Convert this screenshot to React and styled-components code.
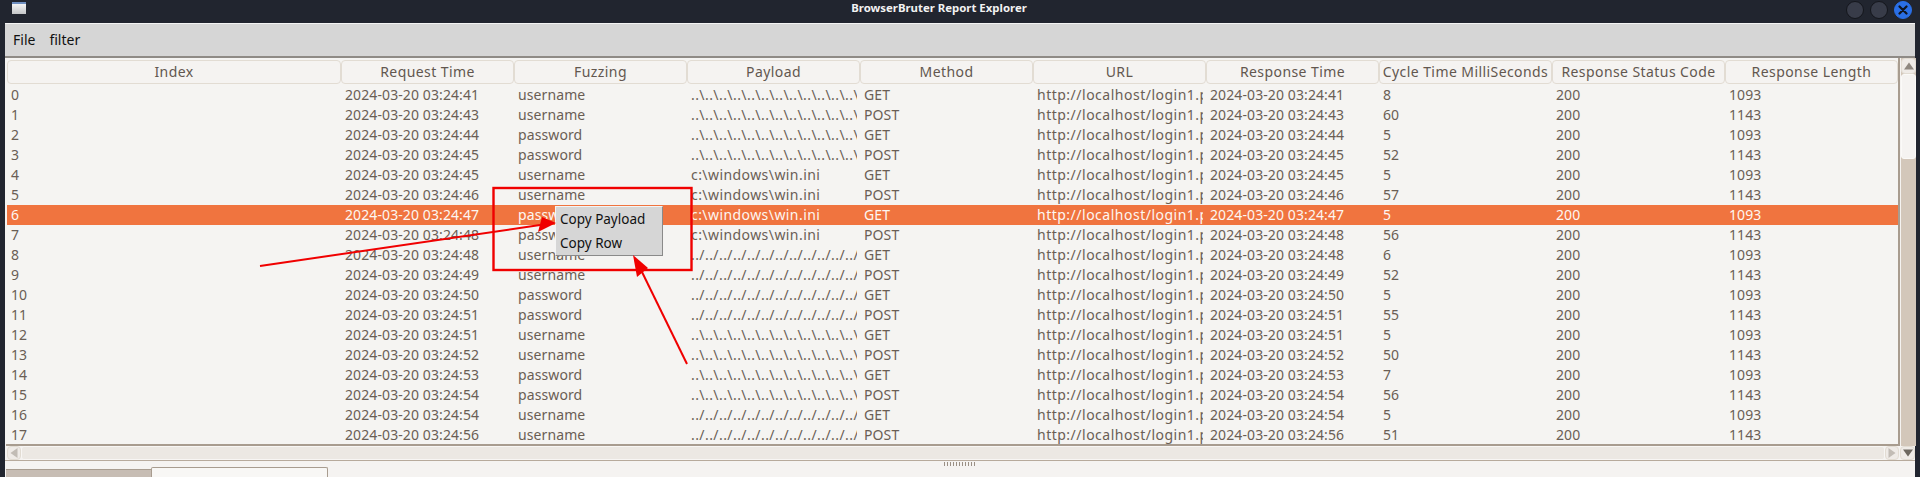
import React from "react";
import styled, { createGlobalStyle } from "styled-components";

const Global = createGlobalStyle`
  html, body { margin: 0; padding: 0; background: #21252f; overflow: hidden; }
  * { box-sizing: border-box; }
`;

const BACK = "..\\".repeat(13);
const WIN = "c:\\windows\\win.ini";
const FWD = "../".repeat(13);
const URL_TEXT = "http://localhost/login1.p";

const rows = [
  [0, "41", "username", BACK, "GET", "8", "1093"],
  [1, "43", "username", BACK, "POST", "60", "1143"],
  [2, "44", "password", BACK, "GET", "5", "1093"],
  [3, "45", "password", BACK, "POST", "52", "1143"],
  [4, "45", "username", WIN, "GET", "5", "1093"],
  [5, "46", "username", WIN, "POST", "57", "1143"],
  [6, "47", "password", WIN, "GET", "5", "1093"],
  [7, "48", "password", WIN, "POST", "56", "1143"],
  [8, "48", "username", FWD, "GET", "6", "1093"],
  [9, "49", "username", FWD, "POST", "52", "1143"],
  [10, "50", "password", FWD, "GET", "5", "1093"],
  [11, "51", "password", FWD, "POST", "55", "1143"],
  [12, "51", "username", BACK, "GET", "5", "1093"],
  [13, "52", "username", BACK, "POST", "50", "1143"],
  [14, "53", "password", BACK, "GET", "7", "1093"],
  [15, "54", "password", BACK, "POST", "56", "1143"],
  [16, "54", "username", FWD, "GET", "5", "1093"],
  [17, "56", "username", FWD, "POST", "51", "1143"],
];

const headers = ["Index", "Request Time", "Fuzzing", "Payload", "Method", "URL", "Response Time", "Cycle Time MilliSeconds", "Response Status Code", "Response Length"];

const COLS = "334px repeat(9, 173px)";

const Page = styled.div`
  position: relative;
  width: 1920px;
  height: 477px;
  overflow: hidden;
  background: #21252f;
  font-family: "Noto Sans", "Open Sans", sans-serif;
  font-size: 14px;
  display: flex;
  flex-direction: column;
`;

const TitleBar = styled.div`
  position: relative;
  height: 23px;
  flex: none;
  display: flex;
  align-items: flex-start;
  justify-content: space-between;
  padding: 2px 8px 0 12px;
`;

const TitleText = styled.div`
  position: absolute;
  left: 0;
  right: 42px;
  top: 0;
  line-height: 16px;
  text-align: center;
  color: #f2f2f2;
  font-size: 11.4px;
  font-weight: 700;
`;

const WindowIcon = styled.div`
  width: 14px;
  height: 12px;
  border-top: 2px solid #6f8fc0;
  background: linear-gradient(180deg, #f4f4f4, #c4c6c8);
`;

const Controls = styled.div`
  display: flex;
  gap: 6px;
  margin-top: -1px;
`;

const Control = styled.div`
  width: 18px;
  height: 18px;
  border-radius: 50%;
  background: ${(p) => (p.$close ? "#2a6fe6" : "#383c49")};
  border: 1px solid ${(p) => (p.$close ? "#2a6fe6" : "#14161c")};
  display: flex;
  align-items: center;
  justify-content: center;
`;

const Win = styled.div`
  flex: 1;
  margin: 0 5px;
  display: flex;
  flex-direction: column;
  background: #f5f3f1;
  border-top: 1px solid #f4f4f4;
  min-height: 0;
`;

const MenuBar = styled.div`
  flex: none;
  height: 34px;
  background: #d6d6d6;
  border-bottom: 2px solid #8f8b86;
  display: flex;
  align-items: center;
  gap: 14px;
  padding: 0 0 2px 8px;
  color: #111;
  font-size: 14px;
`;

const Body = styled.div`
  flex: none;
  height: 388px;
  display: flex;
  padding-left: 1px;
`;

const TableColumn = styled.div`
  width: 1894px;
  display: flex;
  flex-direction: column;
`;

const Table = styled.div`
  height: 388px;
  flex: 1;
  background: #f5f4f2;
  border-right: 2px solid #a89c8f;
  border-bottom: 2px solid #a89c8f;
  padding: 2px 0 0 1px;
  overflow: hidden;
`;

const RowGrid = styled.div`
  display: grid;
  grid-template-columns: ${COLS};
  width: 1891px;
`;

const HeaderCell = styled.div`
  height: 24px;
  line-height: 22px;
  text-align: center;
  color: #62574f;
  background: #f5f3f1;
  border: 1px solid #e2dcd3;
  border-radius: 4px;
  white-space: nowrap;
  overflow: hidden;
  letter-spacing: 0.42px;
`;

const HeaderSpacer = styled.div`
  height: 1px;
`;

const DataRow = styled(RowGrid)`
  height: 20px;
  background: ${(p) => (p.$selected ? "#f0743f" : "transparent")};
  color: ${(p) => (p.$selected ? "#fdf7f2" : "#6a5e55")};
`;

const Cell = styled.div`
  line-height: 20px;
  padding: 0 3px 0 4px;
  white-space: nowrap;
  overflow: hidden;
  letter-spacing: ${(p) => p.$spacing || "0.1px"};
`;

const CellClip = styled.div`
  overflow: hidden;
`;

const VScroll = styled.div`
  width: 15px;
  margin-left: 1px;
  display: flex;
  flex-direction: column;
  background: #d3c7ba;
`;

const ScrollButton = styled.div`
  flex: none;
  width: ${(p) => p.$w}px;
  height: ${(p) => p.$h}px;
  background: #efebe7;
  border: 1px solid #e2dcd3;
  border-radius: 4px;
  display: flex;
  align-items: center;
  justify-content: center;
`;

const VThumb = styled.div`
  flex: none;
  height: 85px;
  background: #f5f3f1;
  border: 1px solid #fbfaf8;
  border-radius: 3px;
`;

const VRest = styled.div`
  flex: 1;
`;

const HScrollRow = styled.div`
  flex: none;
  height: 15px;
  display: flex;
  border-bottom: 1px solid #b7aa9c;
`;

const HScroll = styled.div`
  width: 1894px;
  display: flex;
  padding-left: 2px;
  background: #f5f3f1;
`;

const HThumb = styled.div`
  flex: 1;
  background: #ece8e3;
  border: 1px solid #f8f6f4;
  border-radius: 3px;
`;

const Corner = styled.div`
  flex: 1;
  display: flex;
  justify-content: flex-end;
  background: #f5f3f1;
`;

const Footer = styled.div`
  flex: 1;
  position: relative;
  background: #f5f3f1;
  display: flex;
  align-items: flex-end;
  padding-left: 1px;
  overflow: hidden;
`;

const Grip = styled.div`
  position: absolute;
  left: 939px;
  top: 1px;
  width: 31px;
  height: 4px;
  background: repeating-linear-gradient(90deg, #9a8f84 0 1px, #f5f3f1 1px 3px);
`;

const Tab = styled.div`
  flex: none;
  width: ${(p) => p.$w}px;
  height: ${(p) => p.$h}px;
  background: ${(p) => (p.$active ? "#f8f7f5" : "#c7bdb4")};
  border-top: 1px solid #a89c8f;
  border-left: ${(p) => (p.$active ? "1px solid #a89c8f" : "none")};
  border-right: ${(p) => (p.$active ? "1px solid #a89c8f" : "none")};
  border-radius: ${(p) => (p.$active ? "2px 2px 0 0" : "0")};
`;

const ContextMenu = styled.div`
  position: absolute;
  left: 555px;
  top: 206px;
  width: 108px;
  height: 50px;
  background: #d6d6d6;
  border: 1px solid;
  border-color: #f4f4f4 #8a8a8a #8a8a8a #f4f4f4;
  color: #111;
  font-size: 13.5px;
  z-index: 2;
`;

const MenuItem = styled.div`
  height: 24px;
  line-height: 24px;
  padding-left: 4px;
`;

const Annotations = styled.svg`
  position: absolute;
  left: 0;
  top: 0;
  z-index: 3;
  pointer-events: none;
`;

const Triangle = ({ dir, color }) => {
  const pts = { up: "0,7 5,0 10,7", down: "0,0 10,0 5,7", left: "7,0 7,10 0,5", right: "0,0 0,10 7,5" }[dir];
  return (
    <svg width="10" height="10" viewBox="0 0 10 10">
      <polygon points={pts} fill={color} transform={dir === "up" || dir === "down" ? "translate(0 1.5)" : "translate(1.5 0)"} />
    </svg>
  );
};

export default function App() {
  return (
    <Page>
      <Global />
      <TitleBar>
        <WindowIcon />
        <TitleText>BrowserBruter Report Explorer</TitleText>
        <Controls>
          <Control />
          <Control />
          <Control $close>
            <svg width="10" height="10" viewBox="0 0 10 10">
              <path d="M1.5 1.5 L8.5 8.5 M8.5 1.5 L1.5 8.5" stroke="#10151f" strokeWidth="2.2" strokeLinecap="round" />
            </svg>
          </Control>
        </Controls>
      </TitleBar>
      <Win>
        <MenuBar>
          <span>File</span>
          <span>filter</span>
        </MenuBar>
        <Body>
          <TableColumn>
            <Table>
              <RowGrid>
                {headers.map((h) => (
                  <HeaderCell key={h}>{h}</HeaderCell>
                ))}
              </RowGrid>
              <HeaderSpacer />
              {rows.map(([idx, t, fuzz, payload, method, cycle, len]) => {
                const stamp = `2024-03-20 03:24:${t}`;
                return (
                  <DataRow key={idx} $selected={idx === 6}>
                    <Cell>{idx}</Cell>
                    <Cell>{stamp}</Cell>
                    <Cell>{fuzz}</Cell>
                    <Cell $spacing="0.43px"><CellClip>{payload}</CellClip></Cell>
                    <Cell>{method}</Cell>
                    <Cell $spacing="0.5px"><CellClip>{URL_TEXT}</CellClip></Cell>
                    <Cell>{stamp}</Cell>
                    <Cell>{cycle}</Cell>
                    <Cell>200</Cell>
                    <Cell>{len}</Cell>
                  </DataRow>
                );
              })}
            </Table>
          </TableColumn>
          <VScroll>
            <ScrollButton $w={15} $h={16}><Triangle dir="up" color="#8f8880" /></ScrollButton>
            <VThumb />
            <VRest />
          </VScroll>
        </Body>
        <HScrollRow>
          <HScroll>
            <ScrollButton $w={14} $h={14}><Triangle dir="left" color="#c2bcb5" /></ScrollButton>
            <HThumb />
            <ScrollButton $w={14} $h={14}><Triangle dir="right" color="#c2bcb5" /></ScrollButton>
          </HScroll>
          <Corner>
            <ScrollButton $w={15} $h={14}><Triangle dir="down" color="#6e6860" /></ScrollButton>
          </Corner>
        </HScrollRow>
        <Footer>
          <Grip />
          <Tab $w={145} $h={8} />
          <Tab $active $w={177} $h={10} />
        </Footer>
      </Win>
      <ContextMenu>
        <MenuItem>Copy Payload</MenuItem>
        <MenuItem>Copy Row</MenuItem>
      </ContextMenu>
      <Annotations width="1920" height="477" viewBox="0 0 1920 477">
        <rect x="493.5" y="188" width="198" height="82" fill="none" stroke="#f00000" strokeWidth="2.4" />
        <path d="M260 266 L540 225" stroke="#f00000" strokeWidth="2" fill="none" />
        <polygon points="556,223 538,232 542,217" fill="#f00000" />
        <path d="M687 364 L642 272" stroke="#f00000" strokeWidth="2" fill="none" />
        <polygon points="633,255 648,268 637,277" fill="#f00000" />
      </Annotations>
    </Page>
  );
}
